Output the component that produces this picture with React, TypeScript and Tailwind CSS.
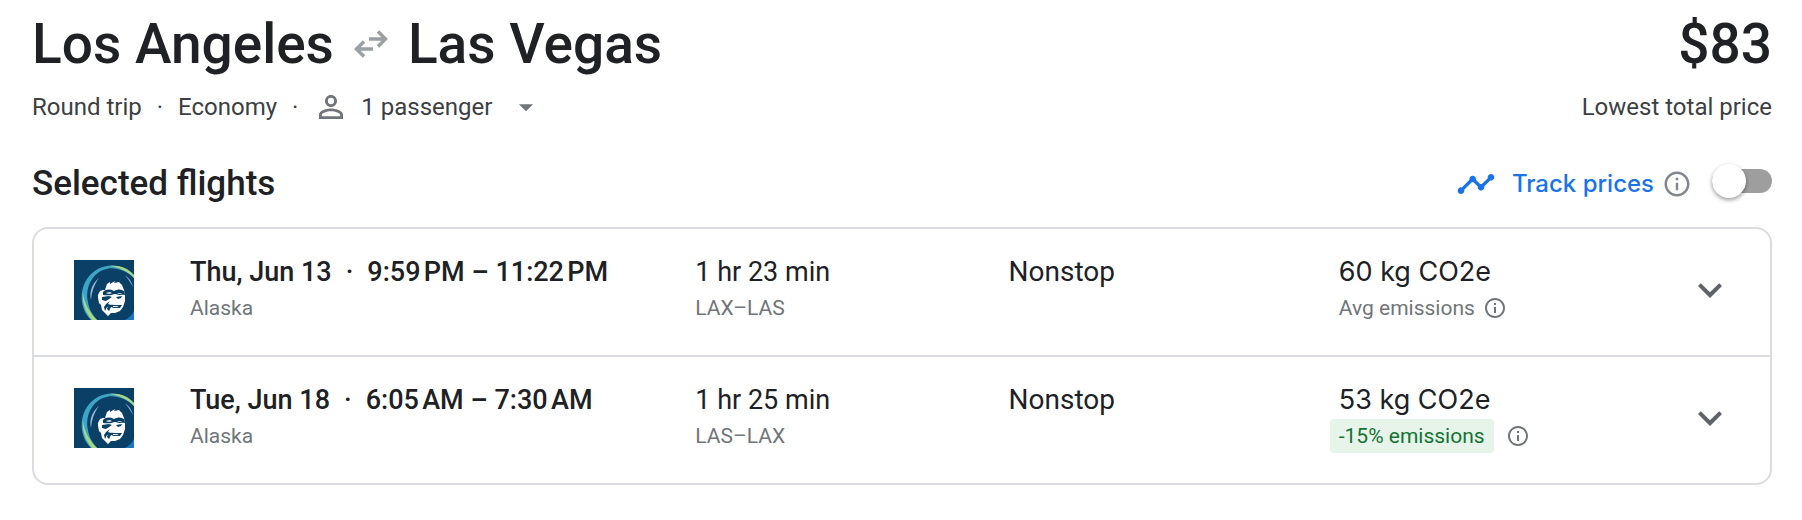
import { useState } from 'react';
import { MdArrowDropDown, MdExpandMore, MdInfoOutline, MdPersonOutline, MdTimeline } from 'react-icons/md';

interface Flight {
  date: string;
  time: string;
  airline: string;
  duration: string;
  route: string;
  stops: string;
  co2: string;
  emissions: string;
  lowEmissions: boolean;
}

const flights: Flight[] = [
  {
    date: 'Thu, Jun 13',
    time: '9:59\u202fPM – 11:22\u202fPM',
    airline: 'Alaska',
    duration: '1 hr 23 min',
    route: 'LAX–LAS',
    stops: 'Nonstop',
    co2: '60 kg CO2e',
    emissions: 'Avg emissions',
    lowEmissions: false,
  },
  {
    date: 'Tue, Jun 18',
    time: '6:05\u202fAM – 7:30\u202fAM',
    airline: 'Alaska',
    duration: '1 hr 25 min',
    route: 'LAS–LAX',
    stops: 'Nonstop',
    co2: '53 kg CO2e',
    emissions: '-15% emissions',
    lowEmissions: true,
  },
];

function RoundTripIcon() {
  return (
    <svg viewBox="0 0 34 28" className="h-7 w-[34px]" fill="none" stroke="#9aa0a6" strokeWidth="3.5" aria-hidden="true">
      <path d="M15 9h17M24 1.5 31.5 9 24 16.5" />
      <path d="M19 19H2M10 11.5 2.5 19l7.5 7.5" />
    </svg>
  );
}

function AlaskaLogo() {
  return (
    <svg viewBox="0 0 60 60" className="size-[60px]" role="img" aria-label="Alaska Airlines">
      <path fill="#0b4066" d="M0 0h60v60H0z" />
      {/* parka hood */}
      <path
        fill="#3ba5c6"
        d="M17 60C6 49 5 31 13 19 21 7 36 2 50 8l10 7v3C50 9 39 6 29 10 17 15 11 29 14 42c1 7 4 12 9 18z"
      />
      <path fill="#a9d683" d="M36 6c9-1 18 2 24 9v3C54 11 46 8 36 6zM9 32c1 11 6 20 14 28h-5C11 52 8 43 9 32z" />
      <path fill="#8db9dc" d="M17 40c-2-9 1-16 8-22-5 7-7 13-8 22zM51 15c4 3 7 7 8 12-2-4-5-8-8-12z" />
      <path fill="#1c78bd" d="M60 51v9h-9c4-2 7-5 9-9z" />
      {/* face */}
      <path
        fill="#fff"
        d="M31 30l2-6 3-2v2l5-3-1 2 5-1 3 3 2 5 1 6v5l-2 6-3 4-5 2-4 0-3 3-3-3-3-3-1-5-2-2-1-5v-3l2-4 3-1z"
      />
      <path
        fill="#0b4066"
        d="M29 32c3-3 7-3 11-1 4-2 7-2 10 0l1 4c-3-1-6 1-9-1l-2 0c-3 2-8 1-11 1zM28 37l7-1 3 1-3 2-3 2-4-1zM42 37l6-1-1 2-3 1zM36 41l-2 3 3 1-4 2-2 4-1-4 2-3zM34 46c3-2 6-1 9-1h5l-2 3-6 0-3-1-2 4-2-2z"
      />
      <path fill="#fff" d="M32 33c2-1 5-1 6 0-1 1-5 1-6 0zM43 33h5c-1 1-4 1-5 0zM39 46h6l-2 1-4 0z" />
    </svg>
  );
}

function FlightRow({ flight }: { flight: Flight }) {
  return (
    <li className="grid grid-cols-[116px_505fr_313fr_330fr_347fr_48px] items-center pt-[25px] pr-9 pb-[30px] pl-10">
      <AlaskaLogo />
      <div>
        <div className="flex gap-3.5 text-[27px] leading-9 font-medium">
          <span>{flight.date}</span>
          <span>·</span>
          <span>{flight.time}</span>
        </div>
        <div className="mt-px text-[21px] leading-[34px] text-[#70757a]">{flight.airline}</div>
      </div>
      <div>
        <div className="text-[27px] leading-9">{flight.duration}</div>
        <div className="mt-px text-[21px] leading-[34px] text-[#70757a]">{flight.route}</div>
      </div>
      <div className="self-start text-[28px] leading-9">{flight.stops}</div>
      <div>
        <div className="font-['Inter',sans-serif] text-[27px] leading-9">{flight.co2}</div>
        <div className="mt-px flex items-center text-[21px] leading-[34px] text-[#70757a]">
          {flight.lowEmissions ? (
            <span className="mr-1 -ml-[9px] rounded bg-[#e6f4ea] px-[9px] text-[#137333]">{flight.emissions}</span>
          ) : (
            <span>{flight.emissions}</span>
          )}
          <button type="button" aria-label="About emissions" className="ml-2">
            <MdInfoOutline className="size-6" />
          </button>
        </div>
      </div>
      <button type="button" aria-label="Flight details" className="text-[#5f6368]">
        <MdExpandMore className="size-12" />
      </button>
    </li>
  );
}

export default function App() {
  const [tracking, setTracking] = useState(false);

  return (
    <main className="bg-white pt-3 pr-[30px] pb-9 pl-8 font-['Roboto',sans-serif] text-[#202124]">
      <header className="flex justify-between">
        <div>
          <h1 className="flex items-center gap-5 text-[55px] leading-[64px] font-medium">
            <span>Los Angeles</span>
            <RoundTripIcon />
            <span>Las Vegas</span>
          </h1>
          <div className="mt-[15px] flex h-8 items-center text-[24px] leading-8 text-[#3c4043]">
            <span>Round trip</span>
            <span className="px-[15px]">·</span>
            <span>Economy</span>
            <span className="px-[15px]">·</span>
            <MdPersonOutline className="size-9 text-[#70757a]" />
            <div className="relative ml-3 flex items-center">
              <select aria-label="Passengers" className="appearance-none pr-[50px]">
                <option>1 passenger</option>
              </select>
              <MdArrowDropDown className="pointer-events-none absolute right-0 size-[34px] text-[#70757a]" />
            </div>
          </div>
        </div>
        <div className="text-right">
          <div className="text-[55px] leading-[64px] font-medium">$83</div>
          <div className="mt-[15px] text-[24px] leading-8 text-[#3c4043]">Lowest total price</div>
        </div>
      </header>

      <div className="mt-[39px] flex items-center justify-between">
        <h2 className="text-[35px] leading-[44px] font-medium">Selected flights</h2>
        <div className="flex items-center">
          <MdTimeline className="size-10 text-[#1a73e8]" />
          <label
            htmlFor="track-prices"
            className="ml-4 font-['Inter',sans-serif] text-[24px] leading-8 font-medium text-[#1a73e8]"
          >
            Track prices
          </label>
          <button type="button" aria-label="About price tracking" className="ml-2 text-[#80868b]">
            <MdInfoOutline className="size-[30px]" />
          </button>
          <input
            id="track-prices"
            type="checkbox"
            role="switch"
            checked={tracking}
            onChange={(e) => setTracking(e.target.checked)}
            className="relative mb-1.5 ml-5 h-6 w-[60px] appearance-none rounded-full bg-[#9e9e9e] before:absolute before:-top-[5px] before:left-0 before:size-[34px] before:rounded-full before:bg-white before:shadow-[0_2px_4px_rgba(0,0,0,0.4)] checked:bg-[#8ab4f8] checked:before:left-[26px] checked:before:bg-[#1a73e8]"
          />
        </div>
      </div>

      <ul className="mt-[21px] divide-y-2 divide-[#dadce0] rounded-2xl border-2 border-[#dadce0]">
        {flights.map((flight) => (
          <FlightRow key={flight.date} flight={flight} />
        ))}
      </ul>
    </main>
  );
}
